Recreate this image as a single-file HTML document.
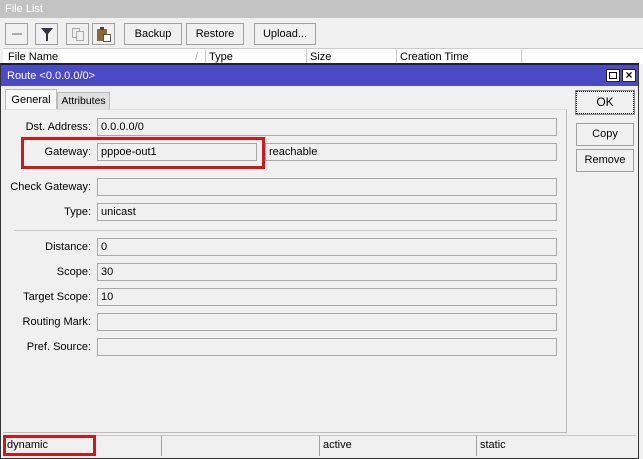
<!DOCTYPE html>
<html><head><style>
*{box-sizing:border-box;margin:0;padding:0}
body{width:643px;height:459px;overflow:hidden;background:#f0f0f0;font-family:"Liberation Sans",sans-serif;font-size:11px;color:#000;position:relative;white-space:nowrap}
.a{position:absolute}
.btn{position:absolute;border:1px solid #a0a0a0;background:#f0f0f0;text-align:center;line-height:20px}
.lbl{position:absolute;text-align:right;width:90px;left:1px;line-height:18px}
.fld{position:absolute;left:97px;width:460px;height:18px;border:1px solid #a8a8a8;background:#f0f0f0;line-height:16px;padding-left:3px}
.cell{position:absolute;top:435px;height:21px;border-left:1px solid #a0a0a0;border-top:1px solid #c8c8c8;line-height:19px;padding-left:3px}
</style></head><body>
<div class="a" style="left:0;top:0;width:643px;height:18px;background:#c3c3c3;color:#fff;line-height:18px;padding-left:5px">File List</div>
<div class="btn" style="left:5px;top:23px;width:23px;height:22px"><div class="a" style="left:6px;top:9px;width:10px;height:2px;background:#aaa"></div></div>
<div class="btn" style="left:35px;top:23px;width:23px;height:22px"><svg class="a" style="left:5px;top:4px" width="12" height="13"><path d="M0 0H12L7 6V13H5V6Z" fill="#334"/></svg></div>
<div class="btn" style="left:66px;top:23px;width:23px;height:22px"><svg class="a" style="left:5px;top:4px" width="12" height="13"><rect x="0.5" y="0.5" width="7" height="9" fill="none" stroke="#aaa"/><rect x="4.5" y="3.5" width="7" height="9" fill="#f0f0f0" stroke="#aaa"/></svg></div>
<div class="btn" style="left:92px;top:23px;width:23px;height:22px"><svg class="a" style="left:4px;top:3px" width="14" height="15"><rect x="0" y="2" width="10" height="12" fill="#8a6a30"/><rect x="3" y="0" width="4" height="3" fill="#444"/><rect x="6.5" y="7.5" width="7" height="7" fill="#fff" stroke="#555"/></svg></div>
<div class="btn" style="left:124px;top:23px;width:58px;height:22px">Backup</div>
<div class="btn" style="left:186px;top:23px;width:58px;height:22px">Restore</div>
<div class="btn" style="left:254px;top:23px;width:62px;height:22px">Upload...</div>
<div class="a" style="left:3px;top:48px;width:640px;height:16px;background:#fff;border-top:1px solid #ccc"></div>
<div class="a" style="left:8px;top:50px;line-height:14px">File Name</div>
<div class="a" style="left:195px;top:50px;line-height:14px;color:#aaa">/</div>
<div class="a" style="left:205px;top:48px;height:16px;border-left:1px solid #ccc;padding-left:3px;line-height:18px">Type</div>
<div class="a" style="left:306px;top:48px;height:16px;border-left:1px solid #ccc;padding-left:3px;line-height:18px">Size</div>
<div class="a" style="left:396px;top:48px;height:16px;border-left:1px solid #ccc;padding-left:3px;line-height:18px">Creation Time</div>
<div class="a" style="left:521px;top:48px;height:16px;border-left:1px solid #ccc"></div>
<div class="a" style="left:0;top:63px;width:639px;height:396px;border:1px solid #333;border-top:2px solid #222;background:#f0f0f0"></div>
<div class="a" style="left:1px;top:65px;width:637px;height:21px;background:#4b4bc8;color:#fff;line-height:22px;padding-left:6px">Route &lt;0.0.0.0/0&gt;</div>
<div class="a" style="left:606px;top:69px;width:14px;height:13px;background:#fff;border:1px solid #222"><div class="a" style="left:2px;top:2px;width:8px;height:7px;border:1px solid #000"></div></div>
<div class="a" style="left:622px;top:69px;width:14px;height:13px;background:#fff;border:1px solid #222;font-size:12px;line-height:11px;text-align:center;font-weight:bold">×</div>
<div class="a" style="left:5px;top:89px;width:52px;height:21px;background:#f8f8f8;border:1px solid #bbb;border-bottom:none;line-height:21px;text-align:center">General</div>
<div class="a" style="left:57px;top:92px;width:53px;height:17px;background:#e0e0e0;border:1px solid #bbb;border-bottom:none;line-height:17px;text-align:center;font-size:10.5px">Attributes</div>
<div class="a" style="left:3px;top:109px;width:564px;height:324px;border:1px solid #bbb;border-left:none;border-top:1px solid #ddd"></div>
<div class="lbl" style="top:118px">Dst. Address:</div><div class="fld" style="top:118px">0.0.0.0/0</div>
<div class="lbl" style="top:143px">Gateway:</div><div class="fld" style="top:143px;width:160px">pppoe-out1</div>
<div class="fld" style="top:143px;left:265px;width:292px">reachable</div>
<div class="a" style="left:21px;top:137px;width:244px;height:32px;border:3px solid #d01818"></div>
<div class="lbl" style="top:178px">Check Gateway:</div><div class="fld" style="top:178px"></div>
<div class="lbl" style="top:203px">Type:</div><div class="fld" style="top:203px">unicast</div>
<div class="a" style="left:14px;top:230px;width:543px;height:1px;background:#ccc"></div>
<div class="lbl" style="top:238px">Distance:</div><div class="fld" style="top:238px">0</div>
<div class="lbl" style="top:263px">Scope:</div><div class="fld" style="top:263px">30</div>
<div class="lbl" style="top:288px">Target Scope:</div><div class="fld" style="top:288px">10</div>
<div class="lbl" style="top:313px">Routing Mark:</div><div class="fld" style="top:313px"></div>
<div class="lbl" style="top:338px">Pref. Source:</div><div class="fld" style="top:338px"></div>
<div class="btn" style="left:576px;top:91px;width:58px;height:23px;border:1px dotted #000;outline:1px solid #888;font-size:12px">OK</div>
<div class="btn" style="left:576px;top:123px;width:58px;height:23px">Copy</div>
<div class="btn" style="left:576px;top:149px;width:58px;height:23px">Remove</div>
<div class="cell" style="left:3px;width:158px">dynamic</div>
<div class="cell" style="left:161px;width:158px"></div>
<div class="cell" style="left:319px;width:157px">active</div>
<div class="cell" style="left:476px;width:160px">static</div>
<div class="a" style="left:3px;top:435px;width:93px;height:21px;border:3px solid #d01818"></div>
</body></html>
